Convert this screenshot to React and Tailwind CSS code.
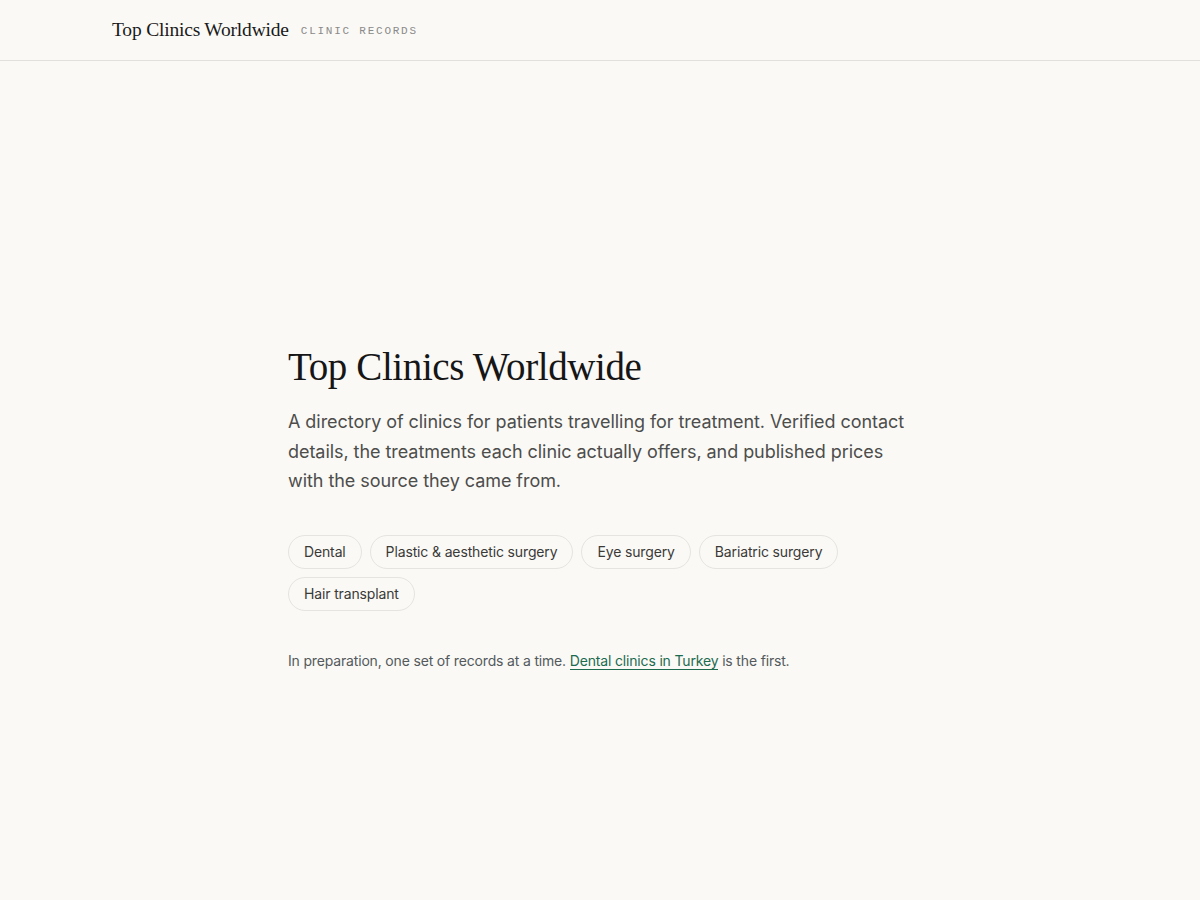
import React from 'react';

const treatments = [
  'Dental',
  'Plastic & aesthetic surgery',
  'Eye surgery',
  'Bariatric surgery',
  'Hair transplant',
];

const serif = "font-['Liberation_Serif',serif]";
const sans = "font-['Inter',sans-serif]";

const App = () => {
  return (
    <div className={`min-h-screen bg-[#faf9f6] ${sans}`}>
      {/* Header */}
      <header className="border-b border-[#e2e0dc]">
        <div className="max-w-5xl mx-auto px-6 h-[60px] flex items-center gap-3">
          <span className={`${serif} text-[19.5px] text-[#1a1a1a] tracking-[-0.01em]`}>Top Clinics Worldwide</span>
          <span className="font-['Liberation_Mono',monospace] text-[11px] tracking-[0.16em] text-[#8a8a88] mt-[3px]">
            CLINIC RECORDS
          </span>
        </div>
      </header>

      {/* Intro */}
      <main className="max-w-2xl mx-auto px-6 pt-[284px] pb-24">
        <h1 className={`${serif} text-[39px] leading-[44px] text-[#161616] tracking-[-0.01em]`}>
          Top Clinics Worldwide
        </h1>
        <p className="mt-[18px] text-[18px] leading-[29.5px] text-[#4d4d4b] tracking-[-0.003em]">
          A directory of clinics for patients travelling for treatment. Verified contact details, the treatments each
          clinic actually offers, and published prices with the source they came from.
        </p>

        <div className="mt-[39px] flex flex-wrap gap-2">
          {treatments.map(t => (
            <span
              key={t}
              className="inline-flex items-center h-[34px] px-[15px] rounded-full border border-[#e6e4e0] text-[14px] tracking-[-0.01em] text-[#3a3a38]"
            >
              {t}
            </span>
          ))}
        </div>

        <p className="mt-[40px] text-[14px] leading-[20px] text-[#545a5c] tracking-[-0.012em]">
          In preparation, one set of records at a time.{' '}
          <a href="#" className="text-[#1d6b4f] border-b border-[#1d6b4f]">Dental clinics in Turkey</a> is the first.
        </p>
      </main>
    </div>
  );
};

export default App;
